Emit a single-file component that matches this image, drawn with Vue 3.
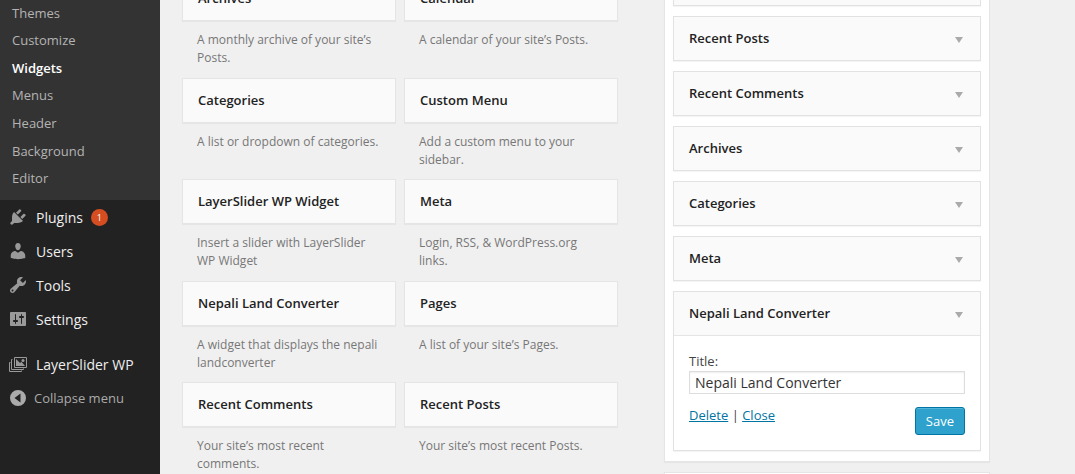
<script setup>
import { ref } from 'vue'

const submenu = ['Themes', 'Customize', 'Widgets', 'Menus', 'Header', 'Background', 'Editor']
const current = 'Widgets'

const menu = [
  {
    label: 'Plugins',
    count: 1,
    path: 'M13.11 4.36L9.87 7.6 8 5.73l3.24-3.24c.35-.34 1.05-.2 1.56.32.52.51.66 1.21.31 1.55zm-8 1.77l.91-1.12 9.01 9.01-1.19.84c-.71.71-2.63 1.16-3.82 1.16H6.14L4.9 17.26c-.59.59-1.54.59-2.12 0-.59-.58-.59-1.53 0-2.12l1.24-1.24v-3.88c0-1.13.4-3.19 1.09-3.89zm7.26 3.97l3.24-3.24c.34-.35 1.04-.21 1.55.31.52.51.66 1.21.31 1.55l-3.24 3.25z',
  },
  {
    label: 'Users',
    path: 'M10 9.25c-2.27 0-2.73-3.44-2.73-3.44C7 4.02 7.82 2 9.97 2c2.16 0 2.98 2.02 2.71 3.81 0 0-.41 3.44-2.68 3.44zm0 2.57L12.72 10c2.39 0 4.52 2.33 4.52 4.53v2.49s-3.65 1.13-7.24 1.13c-3.65 0-7.24-1.13-7.24-1.13v-2.49c0-2.25 1.94-4.48 4.47-4.48z',
  },
  {
    label: 'Tools',
    path: 'M16.68 9.77c-1.34 1.34-3.3 1.67-4.95.99l-5.41 6.52c-.99.99-2.59.99-3.58 0s-.99-2.59 0-3.57l6.52-5.42c-.68-1.65-.35-3.61.99-4.95 1.28-1.28 3.12-1.62 4.72-1.06l-2.89 2.89 2.82 2.82 2.86-2.87c.53 1.58.18 3.39-1.08 4.65zM3.81 16.21c.4.39 1.04.39 1.43 0 .4-.4.4-1.04 0-1.43-.39-.4-1.03-.4-1.43 0-.39.39-.39 1.03 0 1.43z',
  },
  {
    label: 'Settings',
    path: 'M18 16V4c0-.55-.45-1-1-1H3c-.55 0-1 .45-1 1v12c0 .55.45 1 1 1h14c.55 0 1-.45 1-1zM8 11h1c.55 0 1 .45 1 1s-.45 1-1 1H8v1.5c0 .28-.22.5-.5.5s-.5-.22-.5-.5V13H6c-.55 0-1-.45-1-1s.45-1 1-1h1V5.5c0-.28.22-.5.5-.5s.5.22.5.5V11zm5-2h-1c-.55 0-1-.45-1-1s.45-1 1-1h1V5.5c0-.28.22-.5.5-.5s.5.22.5.5V7h1c.55 0 1 .45 1 1s-.45 1-1 1h-1v5.5c0 .28-.22.5-.5.5s-.5-.22-.5-.5V9z',
  },
]

const available = [
  { name: 'Archives', text: 'A monthly archive of your site’s Posts.' },
  { name: 'Calendar', text: 'A calendar of your site’s Posts.' },
  { name: 'Categories', text: 'A list or dropdown of categories.' },
  { name: 'Custom Menu', text: 'Add a custom menu to your sidebar.' },
  { name: 'LayerSlider WP Widget', text: 'Insert a slider with LayerSlider WP Widget' },
  { name: 'Meta', text: 'Login, RSS, & WordPress.org links.' },
  { name: 'Nepali Land Converter', text: 'A widget that displays the nepali landconverter' },
  { name: 'Pages', text: 'A list of your site’s Pages.' },
  { name: 'Recent Comments', text: 'Your site’s most recent comments.' },
  { name: 'Recent Posts', text: 'Your site’s most recent Posts.' },
]

const placed = ['Recent Posts', 'Recent Comments', 'Archives', 'Categories', 'Meta', 'Nepali Land Converter']
const open = ref('Nepali Land Converter')
const title = ref('Nepali Land Converter')
const toggle = (name) => {
  open.value = open.value === name ? '' : name
}
</script>

<template>
  <div class="admin">
    <nav class="sidebar">
      <ul class="submenu">
        <li v-for="item in submenu" :key="item">
          <a href="#" :class="{ current: item === current }">{{ item }}</a>
        </li>
      </ul>
      <ul class="menu">
        <li v-for="item in menu" :key="item.label">
          <a href="#">
            <svg viewBox="0 0 20 20" aria-hidden="true"><path :d="item.path" /></svg>
            <span class="label">{{ item.label }}</span>
            <span v-if="item.count" class="badge">{{ item.count }}</span>
          </a>
        </li>
        <li class="separated">
          <a href="#">
            <svg viewBox="0 0 20 20" aria-hidden="true">
              <path
                d="M6.5 3.5h12v10h-12zM4.5 5.5h-1v10h12v-1M2.5 8.5h-1v9h12v-1"
                fill="none"
                stroke="#999"
              />
              <path d="M8 5l4 4 1.500-1.200L17 12H8z" />
              <circle cx="15" cy="6.500" r="1.500" />
            </svg>
            <span class="label">LayerSlider WP</span>
          </a>
        </li>
      </ul>
      <button type="button" class="collapse">
        <svg viewBox="0 0 20 20" aria-hidden="true">
          <path fill-rule="evenodd" d="M10 2a8 8 0 1 0 0 16a8 8 0 0 0 0-16zM12.500 5.500v9L6.500 10z" />
        </svg>
        <span>Collapse menu</span>
      </button>
    </nav>

    <main class="content">
      <section class="available">
        <article v-for="widget in available" :key="widget.name">
          <h3>{{ widget.name }}</h3>
          <p>{{ widget.text }}</p>
        </article>
      </section>

      <div class="areas">
        <section class="area area-first">
          <div class="widget widget-cut"></div>
          <div v-for="name in placed" :key="name" class="widget">
            <button type="button" class="widget-top" :aria-expanded="open === name" @click="toggle(name)">
              <span>{{ name }}</span>
              <i class="arrow"></i>
            </button>
            <form v-if="open === name" class="widget-form" @submit.prevent>
              <label for="widget-title">Title:</label>
              <input id="widget-title" v-model="title" type="text" />
              <div class="actions">
                <div><a href="#">Delete</a> | <a href="#">Close</a></div>
                <button type="submit" class="save">Save</button>
              </div>
            </form>
          </div>
        </section>
        <section class="area area-next"></section>
      </div>
    </main>
  </div>
</template>

<style>
body {
  background: #f0f0f0;
}
</style>

<style scoped>
.admin {
  display: flex;
  height: 100vh;
  overflow: hidden;
  background: #f0f0f0;
  color: #444;
  font: 13px/18px 'Open Sans', sans-serif;
}
.admin * {
  box-sizing: border-box;
}
ul {
  list-style: none;
  margin: 0;
  padding: 0;
}
button,
input {
  font-family: inherit;
  margin: 0;
}
.sidebar {
  flex: 0 0 160px;
  background: #222;
}
.sidebar a {
  text-decoration: none;
}
.submenu {
  display: grid;
  grid-auto-rows: 1fr;
  height: 201px;
  margin-top: -1px;
  padding: 0 12px 8px;
  background: #333;
}
.submenu li {
  display: flex;
  align-items: center;
}
.submenu a {
  color: #b4b4b4;
}
.submenu .current {
  color: #fff;
  font-weight: 600;
}
.menu a,
.collapse {
  display: flex;
  align-items: center;
  height: 34px;
  padding: 0 8px;
}
.menu a {
  gap: 8px;
  color: #eee;
  font-size: 14px;
}
.menu .label {
  padding-top: 2px;
}
.menu .separated {
  margin-top: 11px;
}
.sidebar svg {
  width: 20px;
  height: 20px;
  fill: #999;
}
.badge {
  width: 17px;
  height: 17px;
  border-radius: 50%;
  background: #d54e21;
  color: #fff;
  font-size: 9px;
  line-height: 17px;
  text-align: center;
}
.collapse {
  gap: 6px;
  width: 100%;
  border: 0;
  background: none;
  color: #aaa;
  font-size: 13px;
}
.collapse svg {
  fill: #aaa;
}
.content {
  flex: 1;
  min-width: 0;
  display: grid;
  grid-template-columns: minmax(0, 436fr) minmax(0, 326fr);
  gap: 46px;
  align-items: start;
  padding: 0 85px 0 22px;
}
.available {
  display: grid;
  grid-template-columns: 1fr 1fr;
  grid-template-rows: repeat(5, 1fr);
  column-gap: 8px;
  height: 508px;
  margin-top: -24px;
}
h3 {
  margin: 0;
  padding: 0 15px;
  border: 1px solid #e5e5e5;
  background: #fafafa;
  box-shadow: 0 1px 1px rgba(0, 0, 0, 0.04);
  color: #222;
  font-size: 13px;
  font-weight: 600;
  line-height: 43px;
}
.available p {
  margin: 0;
  padding: 10px 15px 0;
  color: #777;
  font-size: 12px;
}
.area {
  border: 1px solid #e5e5e5;
  background: #fff;
  box-shadow: 0 1px 1px rgba(0, 0, 0, 0.04);
}
.area-first {
  display: grid;
  gap: 10px;
  margin-top: -41px;
  padding: 0 8px 10px;
}
.area-next {
  height: 60px;
  margin-top: 10px;
}
.widget {
  border: 1px solid #e2e2e2;
  background: #fff;
  box-shadow: 0 1px 1px rgba(0, 0, 0, 0.04);
}
.widget-cut {
  height: 46px;
  background: #fafafa;
}
.widget-top {
  display: flex;
  align-items: center;
  justify-content: space-between;
  width: 100%;
  height: 43px;
  padding: 0 17px 2px 15px;
  border: 0;
  background: #fafafa;
  color: #222;
  font-size: 13px;
  font-weight: 600;
}
.arrow {
  margin-top: 5px;
  border: 4px solid transparent;
  border-top: 6px solid #aaa;
  border-bottom: 0;
}
.widget-form {
  padding: 16px 15px 15px;
  border-top: 1px solid #e5e5e5;
}
label {
  display: block;
}
.widget-form input {
  display: block;
  width: 100%;
  height: 23px;
  margin-top: 1px;
  padding: 0 5px;
  border: 1px solid #ddd;
  background: #fff;
  box-shadow: inset 0 1px 2px rgba(0, 0, 0, 0.07);
  color: #333;
  font-size: 14px;
}
.actions {
  display: flex;
  justify-content: space-between;
  align-items: flex-start;
  margin-top: 13px;
  line-height: 16px;
}
.actions a {
  color: #0074a2;
}
.save {
  height: 28px;
  padding: 0 10px;
  border: 1px solid #0074a2;
  border-radius: 3px;
  background: #2ea2cc;
  box-shadow: inset 0 1px 0 rgba(120, 200, 230, 0.5);
  color: #fff;
  font-size: 13px;
}
</style>
